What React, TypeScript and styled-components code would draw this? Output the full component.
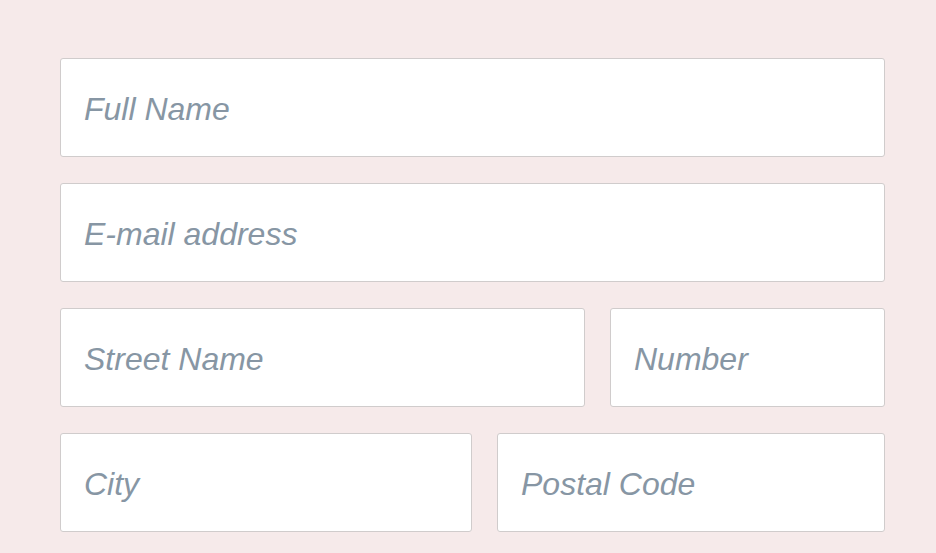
import React from "react";
import styled, { createGlobalStyle } from "styled-components";

const Global = createGlobalStyle`
  html, body {
    margin: 0;
    padding: 0;
    background: #f6eaea;
  }
  * { box-sizing: border-box; }
`;

const Form = styled.form`
  display: flex;
  flex-direction: column;
  gap: 26px;
  width: 825px;
  margin: 0;
  padding: 58px 0 0 60px;
  box-sizing: content-box;
`;

const Row = styled.div<{ $cols: string }>`
  display: grid;
  grid-template-columns: ${(p) => p.$cols};
  column-gap: 25px;
`;

const Field = styled.input`
  display: block;
  width: 100%;
  height: 99px;
  margin: 0;
  padding: 3px 23px 0 23px;
  background: #ffffff;
  border: 1px solid #d0cccc;
  border-radius: 3px;
  font-family: "Liberation Sans", Arial, sans-serif;
  font-style: italic;
  font-size: 32px;
  color: #5d6b78;
  outline: none;
  &::placeholder {
    color: #8796a4;
    opacity: 1;
  }
`;

export default function App() {
  return (
    <>
      <Global />
      <Form>
        <Row $cols="1fr">
          <Field placeholder="Full Name" />
        </Row>
        <Row $cols="1fr">
          <Field placeholder="E-mail address" />
        </Row>
        <Row $cols="525px 275px">
          <Field placeholder="Street Name" />
          <Field placeholder="Number" />
        </Row>
        <Row $cols="412px 388px">
          <Field placeholder="City" />
          <Field placeholder="Postal Code" />
        </Row>
      </Form>
    </>
  );
}
